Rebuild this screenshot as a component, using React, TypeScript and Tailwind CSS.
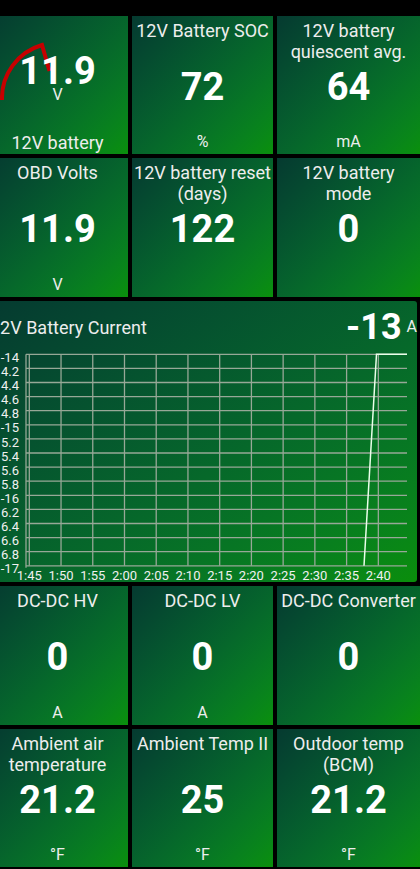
import React from "react";

type TileData = {
  title: string[];
  value: string;
  unit?: string;
};

const row2: TileData[] = [
  { title: ["OBD Volts"], value: "11.9", unit: "V" },
  { title: ["12V battery reset", "(days)"], value: "122" },
  { title: ["12V battery", "mode"], value: "0" },
];

const row4: TileData[] = [
  { title: ["DC-DC HV"], value: "0", unit: "A" },
  { title: ["DC-DC LV"], value: "0", unit: "A" },
  { title: ["DC-DC Converter"], value: "0" },
];

const row5: TileData[] = [
  { title: ["Ambient air", "temperature"], value: "21.2", unit: "°F" },
  { title: ["Ambient Temp II"], value: "25", unit: "°F" },
  { title: ["Outdoor temp", "(BCM)"], value: "21.2", unit: "°F" },
];

// chart geometry, in screen px
const gridTop = 354.3;
const rowStep = 14.1;
const gridBottom = gridTop + rowStep * 15;
const colStart = 29.3;
const colStep = 31.73;
const gridColor = "#97a897";
const times = ["1:45", "1:50", "1:55", "2:00", "2:05", "2:10", "2:15", "2:20", "2:25", "2:30", "2:35", "2:40"];
const yLabels = Array.from({ length: 16 }, (_, i) => {
  const v = -14 - i * 0.2;
  return Math.abs(v - Math.round(v)) < 0.01 ? `${Math.round(v)}` : v.toFixed(1);
});

const Tile = ({ title, value, unit }: TileData) => {
  return (
    <div className="grid grid-cols-1 grid-rows-1 overflow-hidden bg-linear-to-br from-[#053a30] to-[#0a900a] text-white">
      <div className="col-start-1 row-start-1 self-start pt-[4px] text-center text-[18px] leading-[21px] text-[#ededed]">
        {title.map((line) => (
          <div key={line} className="whitespace-nowrap">
            {line}
          </div>
        ))}
      </div>
      <div className="col-start-1 row-start-1 self-center pt-[3px] text-center text-[38px] font-bold leading-none">
        {value}
      </div>
      {unit && (
        <div className="col-start-1 row-start-1 self-end pb-[4px] text-center text-[16px] leading-none text-[#ededed]">
          {unit}
        </div>
      )}
    </div>
  );
};

const GaugeTile = () => {
  return (
    <div className="grid grid-cols-1 grid-rows-1 overflow-hidden bg-linear-to-br from-[#053a30] to-[#0a900a] text-white">
      <svg className="col-start-1 row-start-1" width="141" height="138" viewBox="0 0 141 138">
        <path d="M15 84 A55.5 55.5 0 0 1 55 29 L62.5 55" stroke="#c60000" strokeWidth="4" fill="none" />
      </svg>
      <div className="col-start-1 row-start-1 mt-[36px] flex flex-col items-center self-start">
        <div className="text-[38px] font-bold leading-none">11.9</div>
        <div className="mt-[-3px] text-[16px] leading-none text-[#ededed]">V</div>
      </div>
      <div className="col-start-1 row-start-1 self-end pb-[1px] text-center text-[18px] leading-[21px] text-[#ededed]">
        12V battery
      </div>
    </div>
  );
};

const CurrentChart = () => {
  return (
    <div className="flex h-[281px] w-[430px] flex-col rounded-[3px] bg-linear-to-br from-[#053a30] to-[#0a8e0a] text-white">
      <div className="flex h-[52px] items-center justify-between pl-[3px]">
        <div className="text-[18px] text-[#ededed]">12V Battery Current</div>
        <div className="flex items-center gap-[5px]">
          <span className="text-[36px] font-bold leading-none">-13</span>
          <span className="text-[16px] leading-none text-[#ededed]">A</span>
        </div>
      </div>
      <svg width="430" height="229" viewBox="-13 353 430 229" className="font-['Roboto',sans-serif]">
        {yLabels.map((_, i) => (
          <line
            key={`h${i}`}
            x1={26}
            x2={407}
            y1={gridTop + i * rowStep}
            y2={gridTop + i * rowStep}
            stroke={gridColor}
            strokeWidth="1.3"
          />
        ))}
        {times.map((_, j) => (
          <line
            key={`v${j}`}
            x1={colStart + j * colStep}
            x2={colStart + j * colStep}
            y1={gridTop}
            y2={gridBottom}
            stroke={gridColor}
            strokeWidth="1.3"
          />
        ))}
        <line x1={26} x2={26} y1={gridTop} y2={gridBottom + 2} stroke={gridColor} strokeWidth="1.3" />
        {yLabels.map((label, i) => (
          <text
            key={label}
            x={19}
            y={gridTop + i * rowStep + 7.6}
            textAnchor="end"
            fontSize="13"
            fill="#f0f0f0"
          >
            {label}
          </text>
        ))}
        {times.map((t, j) => (
          <text key={t} x={colStart + j * colStep} y={580.3} textAnchor="middle" fontSize="13" fill="#f0f0f0">
            {t}
          </text>
        ))}
        <polyline
          points={`364,${gridBottom} 376.5,${gridTop} 407,${gridTop}`}
          stroke="#eaffea"
          strokeWidth="1.5"
          fill="none"
        />
      </svg>
    </div>
  );
};

const App = () => {
  return (
    <div className="h-[869px] w-[420px] overflow-hidden bg-black font-['Roboto',sans-serif]">
      <div className="ml-[-13px] flex w-[433px] flex-col gap-[4px] pt-[16px]">
        <div className="grid h-[138px] grid-cols-[141px_141px_143px] gap-x-[4px]">
          <GaugeTile />
          <Tile title={["12V Battery SOC"]} value="72" unit="%" />
          <Tile title={["12V battery", "quiescent avg."]} value="64" unit="mA" />
        </div>
        <div className="grid h-[139px] grid-cols-[141px_141px_143px] gap-x-[4px]">
          {row2.map((t) => (
            <Tile key={t.title.join()} {...t} />
          ))}
        </div>
        <CurrentChart />
        <div className="grid h-[139px] grid-cols-[141px_141px_143px] gap-x-[4px]">
          {row4.map((t) => (
            <Tile key={t.title.join()} {...t} />
          ))}
        </div>
        <div className="grid h-[138px] grid-cols-[141px_141px_143px] gap-x-[4px]">
          {row5.map((t) => (
            <Tile key={t.title.join()} {...t} />
          ))}
        </div>
      </div>
    </div>
  );
}

export default App;
